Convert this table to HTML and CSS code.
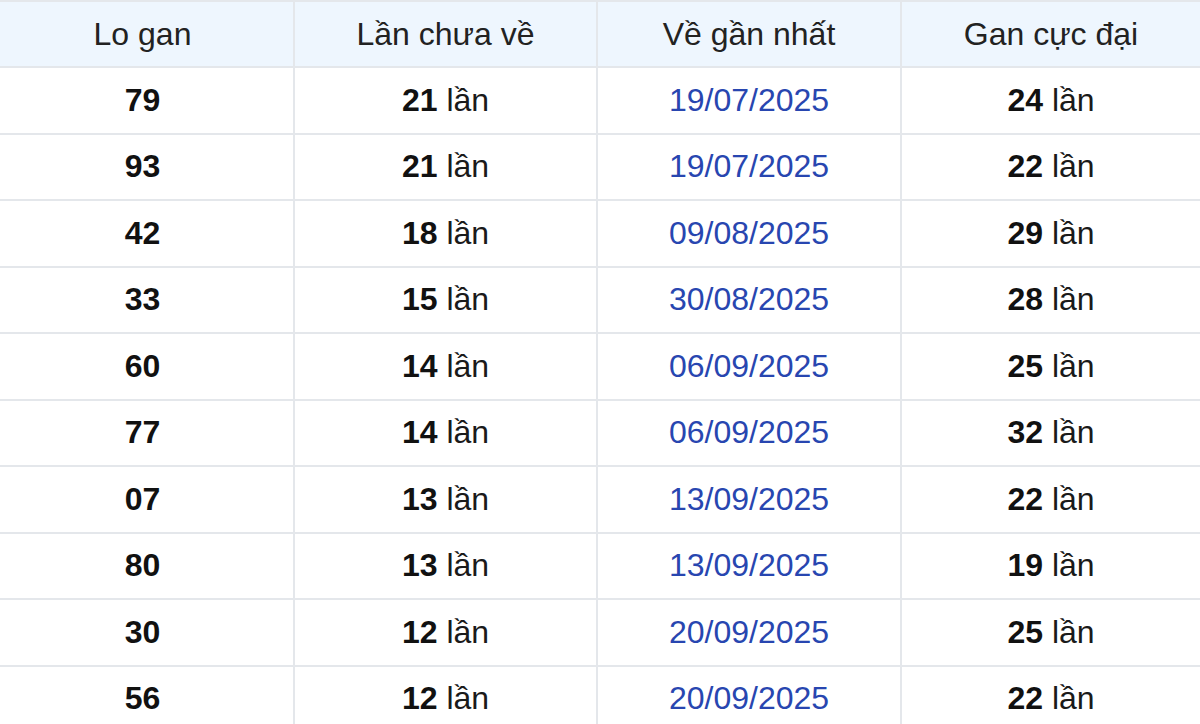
FILE: index.html
```html
<!DOCTYPE html>
<html lang="vi">
<head>
<meta charset="utf-8">
<link rel="stylesheet" href="styles.css">
</head>
<body>
<table class="gan">
  <colgroup>
    <col class="c1"><col class="c2"><col class="c3"><col class="c4">
  </colgroup>
  <thead>
    <tr><th>Lo gan</th><th>Lần chưa về</th><th>Về gần nhất</th><th>Gan cực đại</th></tr>
  </thead>
  <tbody>
    <tr><td><b>79</b></td><td><b>21</b> lần</td><td class="date">19/07/2025</td><td><b>24</b> lần</td></tr>
    <tr><td><b>93</b></td><td><b>21</b> lần</td><td class="date">19/07/2025</td><td><b>22</b> lần</td></tr>
    <tr><td><b>42</b></td><td><b>18</b> lần</td><td class="date">09/08/2025</td><td><b>29</b> lần</td></tr>
    <tr><td><b>33</b></td><td><b>15</b> lần</td><td class="date">30/08/2025</td><td><b>28</b> lần</td></tr>
    <tr><td><b>60</b></td><td><b>14</b> lần</td><td class="date">06/09/2025</td><td><b>25</b> lần</td></tr>
    <tr><td><b>77</b></td><td><b>14</b> lần</td><td class="date">06/09/2025</td><td><b>32</b> lần</td></tr>
    <tr><td><b>07</b></td><td><b>13</b> lần</td><td class="date">13/09/2025</td><td><b>22</b> lần</td></tr>
    <tr><td><b>80</b></td><td><b>13</b> lần</td><td class="date">13/09/2025</td><td><b>19</b> lần</td></tr>
    <tr><td><b>30</b></td><td><b>12</b> lần</td><td class="date">20/09/2025</td><td><b>25</b> lần</td></tr>
    <tr><td><b>56</b></td><td><b>12</b> lần</td><td class="date">20/09/2025</td><td><b>22</b> lần</td></tr>
  </tbody>
</table>
</body>
</html>
```
FILE: styles.css
```css
html, body {
  margin: 0;
  padding: 0;
  background: #ffffff;
}
body {
  font-family: "Liberation Sans", Arial, sans-serif;
  color: #1a1a1a;
  overflow: hidden;
}
.gan {
  width: 1200px;
  border-collapse: collapse;
  table-layout: fixed;
  font-size: 32px;
}
.c1 { width: 294px; }
.c2 { width: 303px; }
.c3 { width: 304px; }
.c4 { width: 299px; }
.gan th, .gan td {
  text-align: center;
  vertical-align: middle;
  padding: 0;
  border: 2px solid #e4e7eb;
}
.gan tr > :first-child { border-left: none; padding-right: 8px; }
.gan tr > :last-child { border-right: none; }
.gan thead th {
  height: 64px;
  background: #eef6fe;
  font-weight: normal;
  color: #222222;
}
.gan tbody td {
  height: 64.5px;
}
.gan b {
  font-weight: bold;
  color: #111111;
}
.gan .date {
  color: #2846b0;
}
```
